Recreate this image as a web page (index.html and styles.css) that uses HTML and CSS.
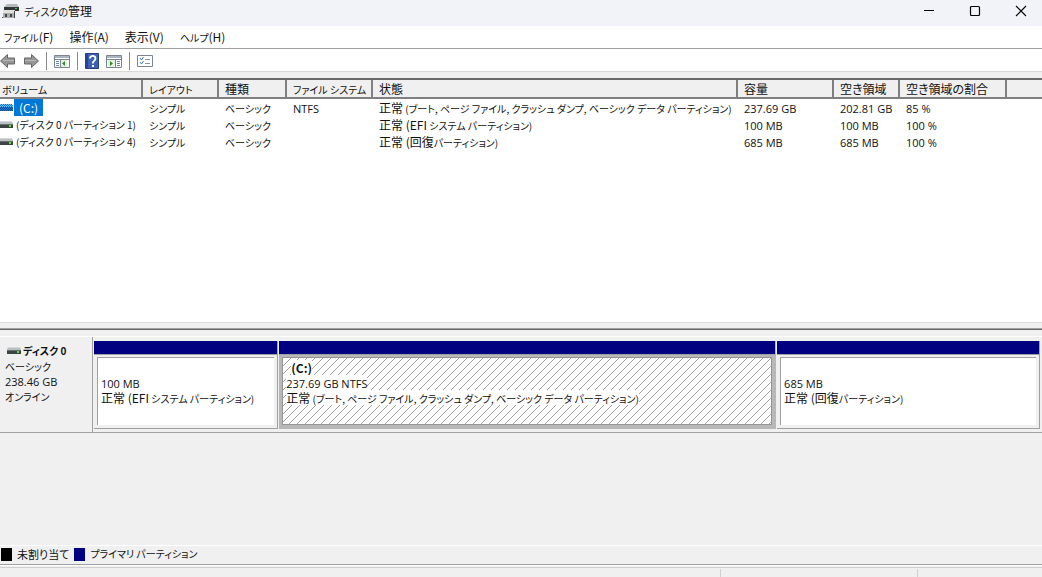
FILE: index.html
```html
<!DOCTYPE html>
<html lang="ja">
<head>
<meta charset="utf-8">
<title>ディスクの管理</title>
<link rel="stylesheet" href="styles.css">
</head>
<body>
<svg class="defs" width="0" height="0" aria-hidden="true">
  <defs>
    <symbol id="drive" viewBox="0 0 14 8"><path fill="#b9c0c1" d="M1 0h12l1 3H0z"/><path fill="#d5d8d8" d="M1 0h12v1H1z"/><path fill="#3d4444" d="M0 3h14v4H0z"/><path fill="#666d6d" d="M0 3h14v1H0z"/><path fill="#52e052" d="M10 4h2v2h-2z"/></symbol>
    <pattern id="checks" width="2" height="2" patternUnits="userSpaceOnUse"><path fill="#0078d7" d="M0 0h1v1H0zM1 1h1v1H1z"/></pattern>
    <pattern id="hatch" width="8" height="8" patternUnits="userSpaceOnUse"><path d="M-1 9 9-1M-1 1 1-1M7 9 9 7" stroke="#a0a0a0" stroke-width="1"/></pattern>
  </defs>
</svg>
<div class="window">
  <header class="titlebar">
    <svg class="app-icon" width="17" height="16" viewBox="0 0 17 16" aria-hidden="true"><path fill="#b5b9ba" d="M5 1h10l2 3H2z"/><path fill="#303637" d="M2 4h15v4H2z"/><path fill="#42c542" d="M13 5h2v1h-2z"/><path fill="#aaaead" d="M1 7h12v8H1z"/><path fill="#e0e1df" d="M1 7h12v3H1z"/><path fill="#3f4444" d="M3 11h2v3H3zM8 11h2v3H8zM0 14h1v1H0zM12 8h1v7h-1z"/></svg>
    <h1 class="title"><span class="kana">ディスクの</span>管理</h1>
    <div class="caption-buttons">
      <button class="caption" aria-label="最小化"><svg width="12" height="12" viewBox="0 0 12 12"><path d="M1 5.500h10" stroke="#000"/></svg></button>
      <button class="caption" aria-label="最大化"><svg width="12" height="12" viewBox="0 0 12 12"><rect x="1.500" y="1.500" width="9" height="9" rx="1" fill="none" stroke="#000" stroke-width="1.200"/></svg></button>
      <button class="caption" aria-label="閉じる"><svg width="12" height="12" viewBox="0 0 12 12"><path d="M1 1l10 10M11 1L1 11" stroke="#000" stroke-width="1.100"/></svg></button>
    </div>
  </header>
  <nav class="menubar">
    <button class="menu"><span class="kana">ファイル</span>(F)</button>
    <button class="menu">操作(A)</button>
    <button class="menu">表示(V)</button>
    <button class="menu"><span class="kana">ヘルプ</span>(H)</button>
  </nav>
  <div class="toolbar">
    <button class="tool" aria-label="戻る"><svg width="16" height="16" viewBox="0 0 16 16"><path fill="#969696" stroke="#666" d="M.5 8 7.500 1.500V5h7v6h-7v3.500z"/><path stroke="#b5b5b5" d="M3 7.500h11"/></svg></button>
    <button class="tool" aria-label="進む"><svg width="16" height="16" viewBox="0 0 16 16"><path fill="#969696" stroke="#666" d="M15.500 8 8.500 1.500V5h-7v6h7v3.500z"/><path stroke="#b5b5b5" d="M2 7.500h11"/></svg></button>
    <span class="divider"></span>
    <button class="tool" aria-label="コンソール ツリーの表示"><svg width="16" height="16" viewBox="0 0 16 16"><path fill="#fff" stroke="#7b8491" d="M.5 2.500h15v12H.5z"/><path fill="#a9b5c5" d="M1 3h14v2H1z"/><path stroke="#7b8491" d="M1 6.500h14M6.500 7v7"/><path stroke="#6688ae" d="M2 8.500h3M2 10.500h3M2 12.500h3"/><path fill="#e6f2e1" d="M7 7h6v7H7z"/><path fill="#35892c" d="M11 8v5L8 10.500z"/></svg></button>
    <span class="divider"></span>
    <button class="tool" aria-label="ヘルプ"><svg width="14" height="17" viewBox="0 0 14 17"><path fill="#3c60b5" stroke="#243f82" d="M.5.5h13v15H.5z"/><path fill="#274594" d="M1 1h2v14H1z"/><path fill="none" stroke="#fff" stroke-width="1.800" d="M5 5.500c0-3.500 5.500-3.500 5.500 0C10.500 8 7.800 7.500 7.800 10.500"/><path fill="#fff" d="M7 12h2v2H7z"/></svg></button>
    <button class="tool" aria-label="操作ウィンドウの表示"><svg width="16" height="16" viewBox="0 0 16 16"><path fill="#fff" stroke="#7b8491" d="M.5 2.500h15v12H.5z"/><path fill="#a9b5c5" d="M1 3h14v2H1z"/><path stroke="#7b8491" d="M1 6.500h14M9.500 7v7"/><path stroke="#6688ae" d="M11 8.500h3M11 10.500h3M11 12.500h3"/><path fill="#e6f2e1" d="M2 7h7v7H2z"/><path fill="#35892c" d="M4 8v5L7 10.500z"/></svg></button>
    <span class="divider"></span>
    <button class="tool" aria-label="プロパティ"><svg width="16" height="16" viewBox="0 0 16 16"><path fill="#fff" stroke="#7b8491" d="M.5 2.500h15v11H.5z"/><path fill="none" stroke="#3479bf" d="M3 5l1.500 2L6.500 4M3 9l1.500 2L6.500 8"/><path stroke="#8e969e" d="M8 6.500h5M8 10.500h5"/></svg></button>
  </div>
  <main class="content">
    <section class="volumes">
      <table class="volume-table">
        <colgroup><col class="c-volume"><col class="c-layout"><col class="c-type"><col class="c-fs"><col class="c-status"><col class="c-size"><col class="c-free"><col class="c-rate"><col></colgroup>
        <thead><tr><th><span class="kana">ボリューム</span></th><th><span class="kana">レイアウト</span></th><th>種類</th><th><span class="kana">ファイル システム</span></th><th>状態</th><th>容量</th><th>空き領域</th><th>空き領域の割合</th><th></th></tr></thead>
        <tbody>
          <tr><td><div class="volume"><svg class="drive" width="14" height="8" viewBox="0 0 14 8"><path fill="#7fbde9" d="M0 0h13l1 2v5H0z"/><path fill="#104f83" d="M0 3h14v4H0z"/><path fill="url(#checks)" d="M0 0h13l1 2v5H0z"/></svg><span class="name selected">(C:)</span></div></td><td><span class="kana">シンプル</span></td><td><span class="kana">ベーシック</span></td><td><span class="latin">NTFS</span></td><td>正常<span class="kana"> (ブート, ページ ファイル, クラッシュ ダンプ, ベーシック データ パーティション)</span></td><td><span class="latin">237.69 GB</span></td><td><span class="latin">202.81 GB</span></td><td><span class="latin">85 %</span></td><td></td></tr>
          <tr><td><div class="volume"><svg class="drive" width="14" height="8"><use href="#drive"/></svg><span class="name kana">(ディスク 0 パーティション 1)</span></div></td><td><span class="kana">シンプル</span></td><td><span class="kana">ベーシック</span></td><td></td><td>正常 (EFI<span class="kana"> システム パーティション)</span></td><td><span class="latin">100 MB</span></td><td><span class="latin">100 MB</span></td><td><span class="latin">100 %</span></td><td></td></tr>
          <tr><td><div class="volume"><svg class="drive" width="14" height="8"><use href="#drive"/></svg><span class="name kana">(ディスク 0 パーティション 4)</span></div></td><td><span class="kana">シンプル</span></td><td><span class="kana">ベーシック</span></td><td></td><td>正常 (回復<span class="kana">パーティション)</span></td><td><span class="latin">685 MB</span></td><td><span class="latin">685 MB</span></td><td><span class="latin">100 %</span></td><td></td></tr>
        </tbody>
      </table>
    </section>
    <div class="splitter"></div>
    <section class="disks">
      <div class="disk">
        <div class="disk-label">
          <div class="disk-name"><svg width="14" height="8"><use href="#drive"/></svg><strong class="kana">ディスク 0</strong></div>
          <div><span class="kana">ベーシック</span></div><div><span class="latin">238.46 GB</span></div><div><span class="kana">オンライン</span></div>
        </div>
        <div class="partitions">
          <div class="partition efi"><div class="bar"></div><div class="frame"><div class="box"><div><span class="latin">100 MB</span></div><div>正常 (EFI<span class="kana"> システム パーティション)</span></div></div></div></div>
          <div class="partition system active"><div class="bar"></div><div class="frame"><div class="box"><svg class="hatching" width="100%" height="100%" aria-hidden="true"><rect width="100%" height="100%" fill="url(#hatch)"/></svg><div class="drive-name"><strong class="patch">(C:)</strong></div><div><span class="patch"><span class="latin">237.69 GB NTFS</span></span></div><div><span class="patch">正常<span class="kana"> (ブート, ページ ファイル, クラッシュ ダンプ, ベーシック データ パーティション)</span></span></div></div></div></div>
          <div class="partition recovery"><div class="bar"></div><div class="frame"><div class="box"><div><span class="latin">685 MB</span></div><div>正常 (回復<span class="kana">パーティション)</span></div></div></div></div>
        </div>
      </div>
    </section>
  </main>
  <div class="legend"><span class="swatch black"></span><span class="unallocated">未割り当て</span><span class="swatch navy"></span><span class="kana">プライマリ パーティション</span></div>
  <footer class="statusbar"><span class="status-main"></span><span class="status-mid"></span><span class="status-end"></span></footer>
</div>
</body>
</html>
```
FILE: styles.css
```css
* { box-sizing: border-box; }
body {
  margin: 0;
  background: #f0f0f0;
  color: #111;
  font: 12px/15px "Noto Sans CJK JP", sans-serif;
  font-feature-settings: "palt";
}
button { border: 0; padding: 0; background: none; color: inherit; font: inherit; font-feature-settings: inherit; }
svg { display: block; flex: none; }
.defs { position: absolute; }
.latin { font-family: "Open Sans", sans-serif; font-size: 11px; line-height: 11px; }
.kana { font-size: 10px; line-height: 10px; }
.window { display: flex; flex-direction: column; min-height: 100vh; }

.titlebar { display: flex; align-items: center; height: 26px; padding: 0 0 4px 2px; background: #f2f3f8; gap: 5px; }
.title { margin: 0; padding-bottom: 2px; flex: 1; font-size: 12px; font-weight: 400; }
.caption-buttons { display: flex; margin-right: -2px; }
.caption { display: grid; place-items: center; width: 46px; height: 20px; }

.menubar { display: flex; align-items: center; height: 22px; padding: 0 0 2px 4px; gap: 16px; background: #fff; }
.menu { white-space: nowrap; }

.toolbar { display: flex; align-items: center; height: 24px; padding-top: 2px; gap: 7px; border-top: 1px solid #a0a0a0; border-bottom: 1px solid #d9d9d9; background: #fff; }
.divider { width: 1px; height: 18px; background: #8c8c8c; }

.content { display: flex; flex: 1; flex-direction: column; padding-top: 6px; }
.volumes { height: 245px; border-top: 2px solid #696969; border-bottom: 1px solid #dcdcdc; background: #fff; }
.volume-table { width: 100%; border-collapse: separate; border-spacing: 0; table-layout: fixed; }
.c-volume { width: 143px; }
.c-layout { width: 76px; }
.c-type { width: 68px; }
.c-fs { width: 86px; }
.c-status { width: 365px; }
.c-size { width: 96px; }
.c-free { width: 66px; }
.c-rate { width: 107px; }
th, td { padding: 0 0 0 6px; text-align: left; white-space: nowrap; }
th { height: 19px; border-right: 2px solid #808080; border-bottom: 2px solid #808080; background: #f0f0f0; font-weight: 400; }
th:first-child { padding-left: 2px; }
th:last-child { border-right: 0; }
td { height: 17px; line-height: 17px; }
td:first-child { padding: 0; }
.volume { display: flex; align-items: center; margin-left: -1px; gap: 1px; }
.name { padding: 0 2px; }
.selected { padding: 0 5px; background: #0078d7; color: #fff; }
.splitter { height: 7px; border-bottom: 1px solid #696969; box-shadow: inset 0 -1px #a0a0a0; }

.disks { flex: 1; padding-top: 6px; }
.disk { display: flex; height: 97px; border-top: 1px solid #fff; border-bottom: 1px solid #a0a0a0; }
.disk-label { width: 93px; padding: 6px 0 0 5px; border-right: 1px solid #a0a0a0; }
.disk-name { display: flex; align-items: center; height: 15px; gap: 2px; padding-left: 2px; }
.partitions { display: flex; flex: 1; padding: 4px 2px 3px 1px; gap: 1px; }
.partition { display: flex; flex-direction: column; min-width: 0; border-right: 1px solid #a0a0a0; border-bottom: 1px solid #a0a0a0; }
.efi { flex: 184; }
.system { flex: 498; }
.recovery { flex: 263; }
.bar { height: 13px; background: #000080; }
.frame { display: flex; flex: 1; padding: 2px 3px 3px; border-top: 1px solid #a0a0a0; }
.box { position: relative; flex: 1; min-width: 0; overflow: hidden; padding: 17px 0 0 3px; border-top: 1px solid #a0a0a0; border-left: 1px solid #a0a0a0; background: #fff; white-space: nowrap; }
.active { border-color: #b8b8b8; }
.active .frame { background: #b8b8b8; }
.active .box { padding-top: 2px; border: 1px solid #969696; }
.hatching { position: absolute; inset: 0; }
.box > div { position: relative; height: 15px; }
.drive-name { padding-left: 5px; }
.patch { display: inline-block; background: #fff; }

.legend { display: flex; align-items: center; height: 20px; padding: 0 0 2px 1px; gap: 5px; border-top: 1px solid #fff; border-bottom: 1px solid #a0a0a0; }
.unallocated { font-size: 11px; }
.swatch { width: 11px; height: 13px; }
.black { background: #000; }
.navy { background: #000080; }
.statusbar { display: flex; height: 12px; padding-top: 3px; border-top: 1px solid #fff; background: linear-gradient(#f0f0f0 1px, #d0d0d0 1px, #d0d0d0 2px, #f0f0f0 2px); }
.status-main { flex: 1; }
.status-mid { width: 197px; border-left: 1px solid #d0d0d0; }
.status-end { width: 125px; border-left: 1px solid #d0d0d0; }
```
